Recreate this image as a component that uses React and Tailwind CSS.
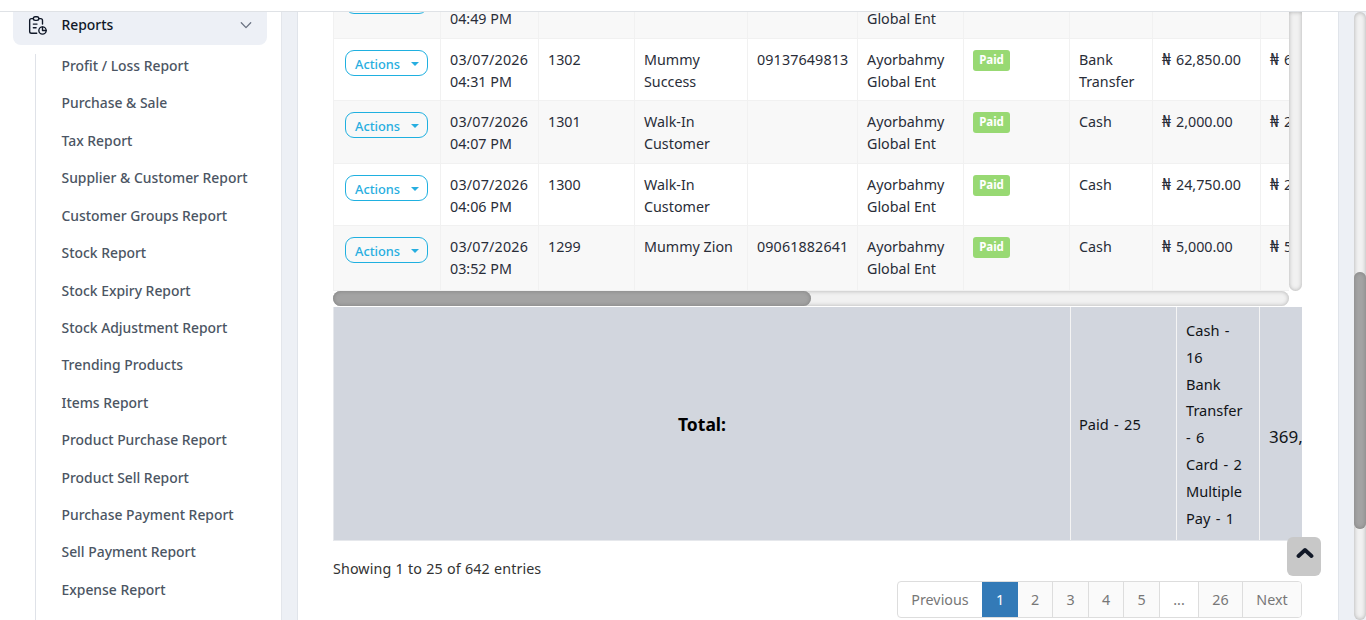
import clsx from "clsx";

const reports = [
  "Profit / Loss Report",
  "Purchase & Sale",
  "Tax Report",
  "Supplier & Customer Report",
  "Customer Groups Report",
  "Stock Report",
  "Stock Expiry Report",
  "Stock Adjustment Report",
  "Trending Products",
  "Items Report",
  "Product Purchase Report",
  "Product Sell Report",
  "Purchase Payment Report",
  "Sell Payment Report",
  "Expense Report",
];

const sales = [
  { time: "04:31 PM", invoice: "1302", customer: "Mummy Success", phone: "09137649813", method: "Bank Transfer", total: "62,850.00" },
  { time: "04:07 PM", invoice: "1301", customer: "Walk-In Customer", phone: "", method: "Cash", total: "2,000.00" },
  { time: "04:06 PM", invoice: "1300", customer: "Walk-In Customer", phone: "", method: "Cash", total: "24,750.00" },
  { time: "03:52 PM", invoice: "1299", customer: "Mummy Zion", phone: "09061882641", method: "Cash", total: "5,000.00" },
];

const rowHeights = ["h-[62px]", "h-[63px]", "h-[62.4px]", "h-[64.6px]"];

const columns = "grid grid-cols-[108px_98px_96px_113px_110px_106px_106px_83px_108px_108px] w-[1036px]";

const pages = [
  { label: "1", width: "w-[36px]", active: true },
  { label: "2", width: "w-[35px]" },
  { label: "3", width: "w-[36px]" },
  { label: "4", width: "w-[35px]" },
  { label: "5", width: "w-[36px]" },
  { label: "...", width: "w-[39px]", disabled: true },
  { label: "26", width: "w-[44px]" },
];

function ReportIcon() {
  return (
    <svg className="w-[22px] h-[22px] shrink-0 text-gray-900" viewBox="0 0 24 24" fill="none" stroke="currentColor" strokeWidth="1.5" strokeLinecap="round" strokeLinejoin="round">
      <path d="M8 5H6a2 2 0 0 0-2 2v12a2 2 0 0 0 2 2h5.7" />
      <path d="M18 14v4h4" />
      <path d="M18 11V7a2 2 0 0 0-2-2h-2" />
      <rect x="8" y="3" width="6" height="4" rx="2" />
      <circle cx="18" cy="18" r="4" />
      <path d="M8 11h4M8 15h3" />
    </svg>
  );
}

function Sidebar() {
  return (
    <aside className="w-[282px] shrink-0 bg-white border-r border-[#e3e6eb] overflow-hidden">
      <div className="ml-[13px] w-[254px] h-[33px] flex items-center bg-[#edf0f6] rounded-b-lg pl-[13px] pb-[7px] pr-[14px]">
        <ReportIcon />
        <span className="ml-[13.5px] text-[13.9px] font-medium text-gray-900">Reports</span>
        <svg className="ml-auto w-[14px] h-[14px] text-gray-500" viewBox="0 0 14 14" fill="none" stroke="currentColor" strokeWidth="1.3" strokeLinecap="round" strokeLinejoin="round">
          <path d="M2.3 4.8 7 9.6l4.7-4.8" />
        </svg>
      </div>
      <ul className="ml-[35px] mt-[9px] h-[570px] border-l border-[#dfe2e8] pl-[25.5px]">
        {reports.map((name) => (
          <li key={name} className="h-[37.43px] flex items-start pt-[1px] leading-[22px] text-[13.9px] font-medium text-[#4b5563] whitespace-nowrap">
            {name}
          </li>
        ))}
      </ul>
    </aside>
  );
}

function ActionsButton() {
  return (
    <button className="w-[83px] h-[26px] flex items-center justify-between border border-[#1fb0e0] rounded-[9px] pt-px pl-[9px] pr-[8px] text-[12.8px] font-medium text-[#27aee0]">
      Actions
      <span className="w-0 h-0 border-x-4 border-x-transparent border-t-4 border-t-[#27aee0]" />
    </button>
  );
}

function Cell({ children, className }) {
  return <div className={clsx("border-r border-[#f1f1f1] pt-[10px] pl-[9px] pr-[6px] leading-[22px]", className)}>{children}</div>;
}

function Amount({ value }) {
  return (
    <>
      <span className="inline-block w-[10px] mr-[4px] text-[15.5px] leading-none">₦</span>
      {value}
    </>
  );
}

function SaleRow({ sale, height, striped }) {
  return (
    <div className={clsx(columns, height, "border-b border-[#f1f1f1] text-[#292d38]", striped && "bg-[#f8f8f8]")}>
      <Cell className="border-l pt-[11px] pl-[11px]"><ActionsButton /></Cell>
      <Cell className="pr-0"><span className="tracking-[0.2px]">03/07/2026</span> {sale.time}</Cell>
      <Cell>{sale.invoice}</Cell>
      <Cell>{sale.customer}</Cell>
      <Cell className="tracking-[0.12px]">{sale.phone}</Cell>
      <Cell>Ayorbahmy Global Ent</Cell>
      <Cell className="pt-[11px]">
        <span className="w-[37px] h-[21px] flex items-center justify-center rounded-[3px] bg-[#98d973] pb-px text-[11.5px] font-bold text-white">Paid</span>
      </Cell>
      <Cell>{sale.method}</Cell>
      <Cell className="pl-[8px] pr-0 whitespace-nowrap"><Amount value={sale.total} /></Cell>
      <Cell className="pl-[8px] pr-0 whitespace-nowrap"><Amount value={sale.total} /></Cell>
    </div>
  );
}

function SalesTable() {
  return (
    <div className="w-[969px]">
      <div className="flex h-[279px]">
        <div className="w-[956px] overflow-hidden">
          {/* bottom half of the row that is scrolled under the header */}
          <div className="h-[27px] flex flex-col justify-end overflow-hidden">
            <div className={clsx(columns, "h-[63px] shrink-0 border-b border-[#f1f1f1] bg-[#f8f8f8] text-[#292d38]")}>
              <Cell className="border-l pt-[12px] pl-[11px]"><ActionsButton /></Cell>
              <Cell>03/07/2026 04:49 PM</Cell>
              <Cell />
              <Cell />
              <Cell />
              <Cell>Ayorbahmy Global Ent</Cell>
              <Cell />
              <Cell />
              <Cell />
              <Cell />
            </div>
          </div>
          {sales.map((sale, i) => (
            <SaleRow key={sale.invoice} sale={sale} height={rowHeights[i]} striped={i % 2 === 1} />
          ))}
        </div>
        <div className="w-[13px] rounded-b-[7px] bg-[#f1f1f1] shadow-[inset_0_0_4px_#b0b0b0]" />
      </div>
      <div className="w-[956px] h-[15px] rounded-full bg-[#f1f1f1] shadow-[inset_0_0_4px_#b0b0b0]">
        <div className="w-[478px] h-[15px] rounded-full bg-[#a3a3a3] shadow-[inset_0_0_4px_#808080]" />
      </div>
      <div className="mt-px h-[234px] overflow-hidden border-b border-l border-[#e6e8ec] bg-[#d2d6de]">
        <div className="grid grid-cols-[737px_106px_83px_108px] w-[1034px] h-full text-[#111418] text-[14.6px]">
          <div className="flex items-center justify-center border-r border-[#f4f4f4] pt-[2px] text-[17.5px] font-bold text-black">Total:</div>
          <div className="flex items-center border-r border-[#f4f4f4] pl-[8px] pt-[3px] [word-spacing:1.5px]">Paid - 25</div>
          <div className="border-r border-[#f4f4f4] pl-[9px] pt-[10px] leading-[26.8px] [word-spacing:1.5px]">
            Cash -<br />16<br />Bank<br />Transfer<br />- 6<br />Card - 2<br />Multiple<br />Pay - 1
          </div>
          <div className="flex items-center pl-[9px] pt-[27px] text-[17px]">369,500.00</div>
        </div>
      </div>
    </div>
  );
}

function Pagination() {
  return (
    <div className="ml-auto flex h-[37px] w-[405px] overflow-hidden rounded-[4px] border border-[#dddddd] text-[#777777]">
      <span className="w-[84px] flex items-center justify-center pt-px">Previous</span>
      {pages.map((page) => (
        <span
          key={page.label}
          className={clsx(
            "flex items-center justify-center pt-px",
            page.width,
            page.active ? "-my-px bg-[#337ab7] text-white" : "border-r border-[#dddddd]",
            !page.active && !page.disabled && "bg-[#fafafa]"
          )}
        >
          {page.label}
        </span>
      ))}
      <span className="flex-1 flex items-center justify-center bg-[#fafafa] pt-px">Next</span>
    </div>
  );
}

export default function App() {
  return (
    <div className="relative w-[1366px] h-[620px] flex flex-col overflow-hidden bg-[#edf0f5] font-['Noto_Sans',sans-serif] text-[14.3px]">
      <header className="h-[12px] shrink-0 bg-white border-b border-[#dfe2e6]" />
      <div className="flex flex-1 min-h-0">
        <Sidebar />
        <main className="ml-[15px] w-[1042px] shrink-0 border-x border-[#e0e4ea] bg-white pl-[35px] overflow-hidden">
          <SalesTable />
          <div className="w-[969px]">
            <p className="mt-[17px] h-[23px] leading-[22px] text-[#333333] tracking-[0.1px] [word-spacing:0.4px]">Showing 1 to 25 of 642 entries</p>
            <Pagination />
          </div>
        </main>
        <div className="ml-auto w-[12px] rounded-full bg-[#f1f1f1] shadow-[inset_0_0_4px_#aaaaaa] pt-[260px]">
          <div className="h-[257px] rounded-full bg-[#a3a3a3] shadow-[inset_0_0_4px_#808080]" />
        </div>
      </div>
      <button className="absolute left-[1287px] top-[537px] w-[34px] h-[39px] rounded-[6px] bg-[#c8c8c8] pl-[9px] pb-[7px]">
        <svg className="w-[18px] h-[14px]" viewBox="0 0 18 14" fill="none" stroke="#111827" strokeWidth="3.8" strokeLinecap="round" strokeLinejoin="round">
          <path d="m2.5 10 6.5-6 6.5 6" />
        </svg>
      </button>
    </div>
  );
}
